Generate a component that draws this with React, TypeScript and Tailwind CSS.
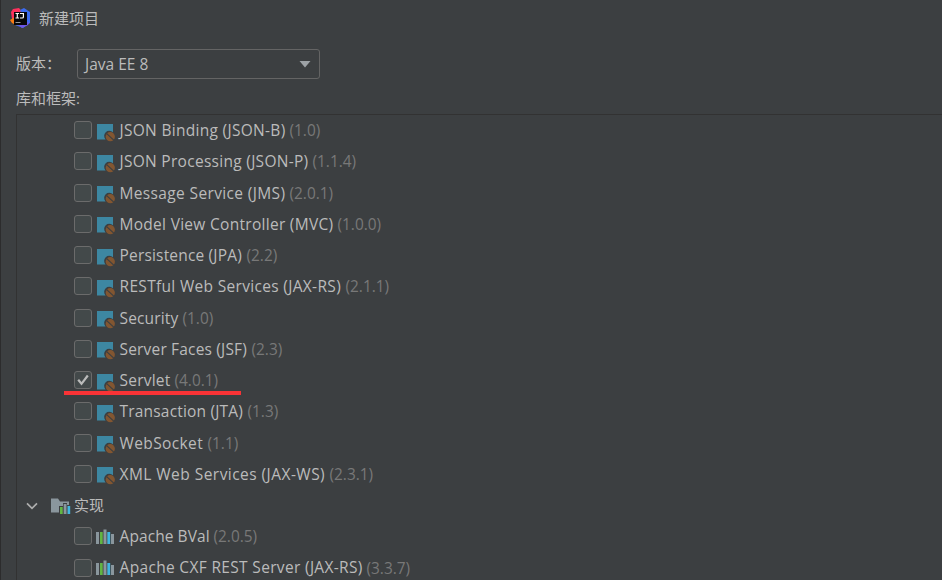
import React from "react";

type Item = { name: string; version: string; nameClass: string; checked?: boolean };

const specifications: Item[] = [
  { name: "JSON Binding (JSON-B)", version: "(1.0)", nameClass: "w-[170px] tracking-[0.3px]" },
  { name: "JSON Processing (JSON-P)", version: "(1.1.4)", nameClass: "w-[193px] tracking-[0.29px]" },
  { name: "Message Service (JMS)", version: "(2.0.1)", nameClass: "w-[170px] tracking-[0.36px]" },
  { name: "Model View Controller (MVC)", version: "(1.0.0)", nameClass: "w-[218px] tracking-[0.29px]" },
  { name: "Persistence (JPA)", version: "(2.2)", nameClass: "w-[127px] tracking-[0.18px]" },
  { name: "RESTful Web Services (JAX-RS)", version: "(2.1.1)", nameClass: "w-[226px] tracking-[0.32px]" },
  { name: "Security", version: "(1.0)", nameClass: "w-[63px] tracking-[0.14px]" },
  { name: "Server Faces (JSF)", version: "(2.3)", nameClass: "w-[132px] tracking-[0.18px]" },
  { name: "Servlet", version: "(4.0.1)", nameClass: "w-[55px] tracking-[0.22px]", checked: true },
  { name: "Transaction (JTA)", version: "(1.3)", nameClass: "w-[128px] tracking-[0.19px]" },
  { name: "WebSocket", version: "(1.1)", nameClass: "w-[88px] tracking-[0.38px]" },
  { name: "XML Web Services (JAX-WS)", version: "(2.3.1)", nameClass: "w-[210px] tracking-[0.46px]" },
];

const implementations: Item[] = [
  { name: "Apache BVal", version: "(2.0.5)", nameClass: "w-[94px] tracking-[0.08px]" },
  { name: "Apache CXF REST Server (JAX-RS)", version: "(3.3.7)", nameClass: "w-[247px] tracking-[0.33px]" },
];

function AppLogo() {
  return (
    <svg width="21" height="20" viewBox="0 0 21 20">
      <path d="M1 4 L3 1 L9 0 L13 5 L6 15 L2 11Z" fill="#fe315d" />
      <path d="M0 12 L5 9 L8 18 L2 15Z" fill="#f97a12" />
      <path d="M10 2 L14 0 L20 4 L20 15 L13 20 L5 17 L14 13Z" fill="#3b6cf0" />
      <path d="M7 16 L19 14 L18 17 L12 20Z" fill="#6f57e8" />
      <rect x="4" y="4" width="13" height="13" fill="#08080a" />
      <path d="M5.5 5.5h3.6M7.3 5.5v4.5M5.5 10h3.6M10 5.5h3.4v3.5q0 1-1 1H10" fill="none" stroke="#fff" strokeWidth="1.2" />
      <path d="M5.5 14.5h5" stroke="#9a9a9a" />
    </svg>
  );
}

function Checkbox({ checked }: { checked?: boolean }) {
  return (
    <span className="mb-px flex h-[18px] w-[18px] shrink-0 items-center justify-center rounded-[3px] border border-[#6b6b6b] bg-[#43494a]">
      {checked && (
        <svg width="16" height="16" viewBox="0 0 16 16" fill="none">
          <path d="M3.2 7.8 L6.5 11.8 L12.8 3.5" stroke="#bbbbbb" strokeWidth="2.2" />
        </svg>
      )}
    </span>
  );
}

function SpecIcon() {
  return (
    <svg width="19" height="19" viewBox="0 0 19 19" className="shrink-0">
      <path d="M0 1h16v8.3a5 5 0 0 0-7.4 7.2H0z" fill="#3d87a2" />
      <circle cx="13.3" cy="13.7" r="4.6" fill="#825631" />
      <path d="M9.7 10.6 L16.7 17.1" stroke="#3c3f41" strokeWidth="1.2" />
    </svg>
  );
}

function LibraryIcon() {
  return (
    <svg width="19" height="19" viewBox="0 0 19 19" className="shrink-0">
      <path d="M0 4h3v12H0zM7.5 1.5h3v14.5h-3zM15 6h3v10h-3z" fill="#8a969d" />
      <path d="M4 4h2.7v12H4z" fill="#62b543" />
      <path d="M11.3 4h2.9v12h-2.9z" fill="#40b6e0" />
    </svg>
  );
}

function FolderIcon() {
  return (
    <svg width="20" height="18" viewBox="0 0 20 18" className="shrink-0">
      <path d="M0 1.5h7l2 3h9V8h-2V6h-4v3H8v6.5H0z" fill="#8a969d" />
      <path d="M9 10h2.7v7H9z" fill="#62b543" />
      <path d="M12.7 7h2.8v10h-2.8z" fill="#8a969d" />
      <path d="M16.5 9h2.7v8h-2.7z" fill="#40b6e0" />
    </svg>
  );
}

function Row({ item, library }: { item: Item; library?: boolean }) {
  return (
    <li className="relative flex h-[31.25px] items-center pl-[56.5px]">
      <Checkbox checked={item.checked} />
      <span className={library ? "ml-[4.5px] mr-[3.5px] pt-px" : "ml-[5.5px] mr-[3.5px] pt-[3px]"}>
        {library ? <LibraryIcon /> : <SpecIcon />}
      </span>
      <span className={`${item.nameClass} ${library ? "ml-px" : ""} shrink-0 whitespace-nowrap text-[15.5px]`}>{item.name}</span>
      <span className="whitespace-nowrap text-[15.4px] text-[#787878]">{item.version}</span>
      {item.checked && <span className="absolute top-[26px] left-[47px] h-1 w-[177px] bg-[#f93336]" />}
    </li>
  );
}

export default function App() {
  return (
    <div className="flex h-[580px] w-[942px] flex-col overflow-hidden border-l border-[#2c2c2d] bg-[#3c3f41] font-['Open_Sans','Noto_Sans_CJK_SC',sans-serif] text-[15px] text-[#bbbbbb]">
      <header className="flex h-9 shrink-0 items-center pl-[9px]">
        <AppLogo />
        <h1 className="ml-[8px]">新建项目</h1>
      </header>
      <div className="flex h-[56px] shrink-0 items-center pl-[15px]">
        <label className="w-[61px] pb-0.5">版本：</label>
        <button className="flex h-[30px] w-[243px] items-center justify-between rounded-[3px] border border-[#646464] pr-[8px] pl-[7px]">
          <span className="pt-px text-[15.5px]">Java EE 8</span>
          <svg width="12" height="7" viewBox="0 0 12 7">
            <path d="M0.5 0h11L6 6.5z" fill="#9da2a6" />
          </svg>
        </button>
      </div>
      <div className="h-[22px] shrink-0 pl-[15px] leading-[12px]">库和框架:</div>
      <main className="ml-[15px] min-h-0 flex-1 overflow-hidden border-t border-l border-[#323232]">
        <ul>
          {specifications.map((item) => (
            <Row key={item.name} item={item} />
          ))}
        </ul>
        <div className="flex h-[31.2px] items-center pl-[9px]">
          <svg width="12" height="8" viewBox="0 0 12 8" fill="none">
            <path d="M1 1.3 L6 6.3 L11 1.3" stroke="#adadad" strokeWidth="1.7" />
          </svg>
          <span className="ml-[13px] mr-[3px]">
            <FolderIcon />
          </span>
          <span>实现</span>
        </div>
        <ul>
          {implementations.map((item) => (
            <Row key={item.name} item={item} library />
          ))}
        </ul>
      </main>
    </div>
  );
}
